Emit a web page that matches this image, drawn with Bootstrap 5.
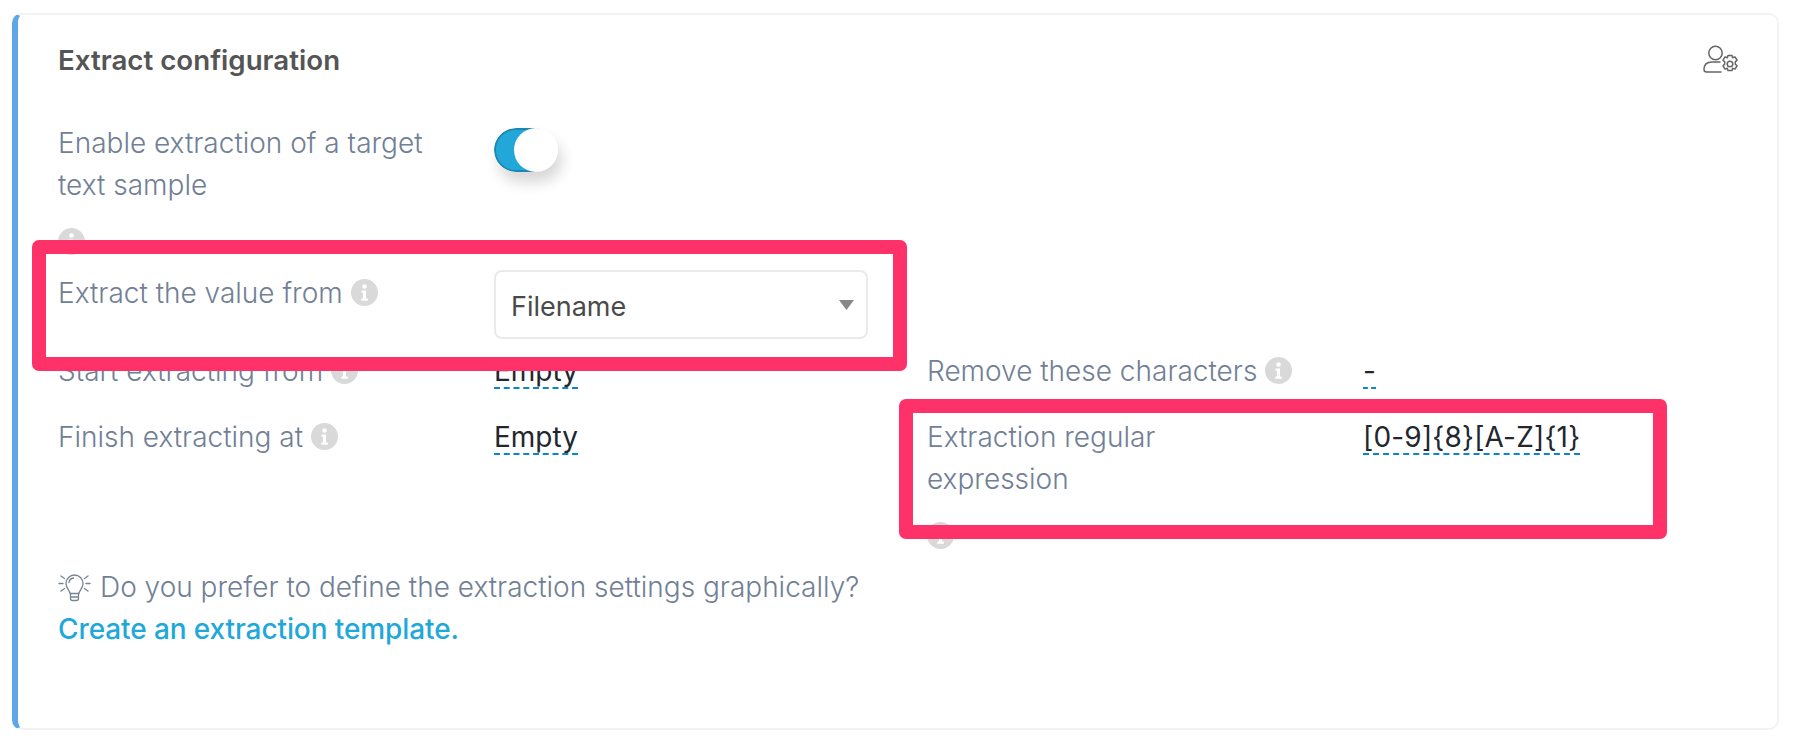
<!DOCTYPE html>
<html lang="en">
<head>
<meta charset="utf-8">
<title>Extract configuration</title>
<link href="https://cdn.jsdelivr.net/npm/bootstrap@5.3.0/dist/css/bootstrap.min.css" rel="stylesheet">
<style>
html,body{height:100%}
body{background:#fff;font-family:Inter,"Liberation Sans",sans-serif;font-size:28px;line-height:42px;color:#718096;font-weight:300;overflow:hidden}
.page-wrap{position:relative;padding:13px 19px 12px 12px}
.cfg-card{height:717px;border:2px solid #f2f3f5;border-left:6px solid #5ea6e6;border-radius:10px;padding:0 0 0 40px;background:#fff}
.cfg-head{height:60px;margin-top:25px;margin-bottom:22px;padding-right:38px}
.cfg-title{font-size:27.7px;line-height:40px;font-weight:600;color:#555;margin:0}
.user-gear{width:36px;height:29px;margin-top:5px;color:#666}
.cfg-grid{width:1738px}
.cfg-cell{width:869px;display:flex}
.cfg-label{width:436px;flex:none;padding-right:65px}
.cfg-val{color:#22272e;font-weight:400}
.dash{border-bottom:2px dashed #0a87c9;display:inline-block;line-height:34px;height:35px}
.dash-wide{letter-spacing:.2px}
.tip{width:27px;height:27px;vertical-align:-3px;margin-left:0}
.tip-below{display:block;margin:22px 0 0}
.row-a{height:150px}
.row-b{height:78px}
.row-c{height:66px}
.row-d{height:150px}
.toggle-input.form-check-input{width:64px;height:44px;margin:6px 0 0;border:0;background-color:transparent;border-radius:22px;box-shadow:4px 10px 14px rgba(0,0,0,.16);background-image:url("data:image/svg+xml,%3Csvg xmlns='http://www.w3.org/2000/svg' viewBox='0 0 64 44'%3E%3Crect x='1' y='1' width='60' height='42' rx='21' fill='%2321a7d8' stroke='%231b87b1' stroke-width='2'/%3E%3Ccircle cx='42' cy='22' r='22' fill='%23fff'/%3E%3C/svg%3E");background-size:64px 44px;background-position:center;float:none}
.pick{width:374px;height:69px;margin-top:-2px;border:2px solid #e9e9ee;border-radius:8px;font-size:27px;font-weight:400;color:#4a4a4a;padding:5px 40px 0 15px;background-image:url("data:image/svg+xml,%3Csvg xmlns='http://www.w3.org/2000/svg' viewBox='0 0 15 10'%3E%3Cpath d='M0 0h15L7.500 10z' fill='%23888'/%3E%3C/svg%3E");background-size:15px 10px;background-position:right 12px center;font-family:inherit}
.bulb{width:33px;height:28px;vertical-align:-5px;margin-right:9px;color:#778494}
.tmpl-link{color:#1fa8da;font-weight:500;text-decoration:none;letter-spacing:-.1px}
.mark-box{position:absolute;border:14px solid #ff3169;border-radius:7px;pointer-events:none}
.mark-one{left:32px;top:240px;width:875px;height:131px}
.mark-two{left:899px;top:399px;width:768px;height:140px}
</style>
</head>
<body>
<svg width="0" height="0" class="position-absolute">
<symbol id="info" viewBox="0 0 27 27"><circle cx="13.500" cy="13.500" r="13.500" fill="#d9d9d9"/><circle cx="13.500" cy="7.500" r="2.300" fill="#fff"/><path d="M10.500 11.500h4.500v8h1.800v2.200h-6.500v-2.200h1.600v-5.800h-1.400z" fill="#fff"/></symbol>
</svg>
<div class="page-wrap">
<div class="cfg-card">
  <div class="cfg-head d-flex justify-content-between align-items-start">
    <h5 class="cfg-title">Extract configuration</h5>
    <svg class="user-gear" viewBox="0 0 36 28" fill="none" stroke="currentColor" stroke-width="1.500" stroke-linecap="round" stroke-linejoin="round">
      <circle cx="12.500" cy="7.500" r="6.700"/>
      <path d="M18 26.500H3.500Q1 26.500 1 24Q1 16.500 9 16.500H17"/>
      <circle cx="27" cy="18.500" r="2.800"/>
      <path d="M25 10h4l.7 2.300 2.300-.9 2 3.300-1.700 1.700v2.200l1.700 1.700-2 3.300-2.300-.9-.7 2.300h-4l-.7-2.300-2.300.9-2-3.300 1.700-1.700v-2.200l-1.700-1.700 2-3.300 2.300.9z"/>
    </svg>
  </div>
  <div class="cfg-grid">
    <div class="d-flex row-a">
      <div class="cfg-cell">
        <div class="cfg-label">Enable extraction of a target text sample<svg class="tip tip-below"><use href="#info"/></svg></div>
        <div class="form-check form-switch m-0 p-0"><input class="form-check-input toggle-input" type="checkbox" role="switch" checked aria-label="Enable extraction"></div>
      </div>
    </div>
    <div class="d-flex row-b">
      <div class="cfg-cell">
        <div class="cfg-label">Extract the value from <svg class="tip"><use href="#info"/></svg></div>
        <select class="form-select pick" aria-label="Extract the value from"><option>Filename</option></select>
      </div>
    </div>
    <div class="d-flex row-c">
      <div class="cfg-cell">
        <div class="cfg-label text-nowrap">Start extracting from <svg class="tip"><use href="#info"/></svg></div>
        <div class="cfg-val"><span class="dash">Empty</span></div>
      </div>
      <div class="cfg-cell">
        <div class="cfg-label text-nowrap">Remove these characters <svg class="tip"><use href="#info"/></svg></div>
        <div class="cfg-val"><span class="dash">-</span></div>
      </div>
    </div>
    <div class="d-flex row-d">
      <div class="cfg-cell">
        <div class="cfg-label">Finish extracting at <svg class="tip"><use href="#info"/></svg></div>
        <div class="cfg-val"><span class="dash">Empty</span></div>
      </div>
      <div class="cfg-cell">
        <div class="cfg-label">Extraction regular expression<svg class="tip tip-below"><use href="#info"/></svg></div>
        <div class="cfg-val"><span class="dash dash-wide">[0-9]{8}[A-Z]{1}</span></div>
      </div>
    </div>
  </div>
  <div>
    <svg class="bulb" viewBox="0 0 33 28" fill="none" stroke="currentColor" stroke-width="1.300" stroke-linecap="round" stroke-linejoin="round">
      <path d="M12 19.500c0-3-4-5-4-10a8.500 8.500 0 0 1 17 0c0 5-4 7-4 10z"/>
      <path d="M12.500 19.500v5q0 2 2 2h4q2 0 2-2v-5M12.500 23h8M11 8.500q.5-4 4.500-4.500"/>
      <path d="M1 9.500h4M28 9.500h4M3 2l3.500 2.500M30 2l-3.500 2.500M3 17l3.500-2.500M30 17l-3.500-2.500"/>
    </svg>Do you prefer to define the extraction settings graphically?<br>
    <a class="tmpl-link" href="#">Create an extraction template.</a>
  </div>
</div>
<div class="mark-box mark-one"></div>
<div class="mark-box mark-two"></div>
</div>
</body>
</html>
